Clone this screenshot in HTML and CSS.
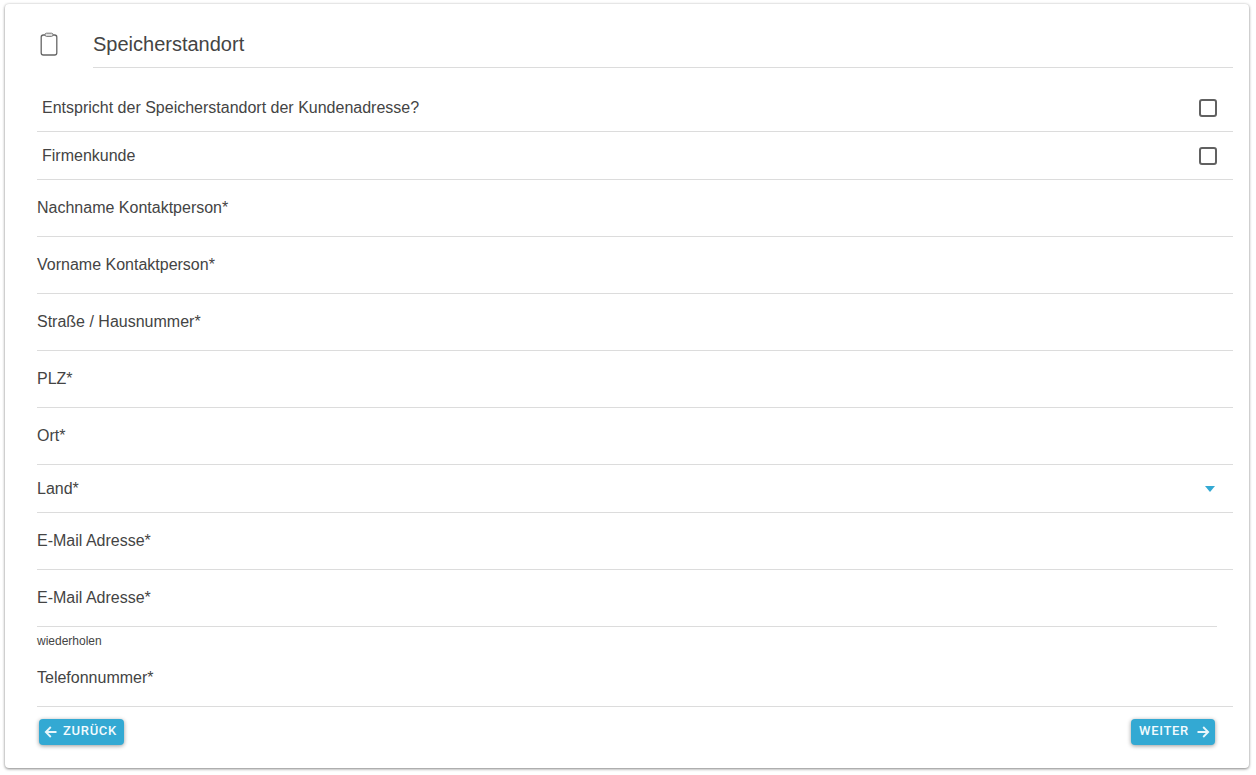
FILE: index.html
```html
<!DOCTYPE html>
<html lang="de">
<head>
<meta charset="utf-8">
<title>Speicherstandort</title>
<link rel="stylesheet" href="styles.css">
</head>
<body>
<main class="card">
  <header class="head">
    <svg class="clip" width="18" height="24" viewBox="0 0 18 24" aria-hidden="true">
      <rect x="1.2" y="3" width="15.6" height="20" rx="2.2" fill="none" stroke="#666" stroke-width="1.3"/>
      <rect x="5" y="1.2" width="8" height="3.2" rx="1.5" fill="#e4e4e4" stroke="#777" stroke-width="1"/>
    </svg>
    <h1 class="title">Speicherstandort</h1>
  </header>
  <div class="form">
    <label class="check-row"><span>Entspricht der Speicherstandort der Kundenadresse?</span><i class="box"></i></label>
    <label class="check-row"><span>Firmenkunde</span><i class="box"></i></label>
    <div class="field">Nachname Kontaktperson*</div>
    <div class="field">Vorname Kontaktperson*</div>
    <div class="field">Straße / Hausnummer*</div>
    <div class="field">PLZ*</div>
    <div class="field">Ort*</div>
    <div class="select">Land*<i class="caret"></i></div>
    <div class="field">E-Mail Adresse*</div>
    <div class="field short">E-Mail Adresse*</div>
    <div class="hint">wiederholen</div>
    <div class="field">Telefonnummer*</div>
  </div>
  <footer class="actions">
    <button class="btn back" type="button">
      <svg width="14" height="14" viewBox="0 0 14 14" aria-hidden="true"><path d="M12.5 7H2M6.8 2 1.8 7l5 5" fill="none" stroke="#e8f6fb" stroke-width="1.8"/></svg>
      <span class="btn-label">ZURÜCK</span>
    </button>
    <button class="btn next" type="button">
      <span class="btn-label">WEITER</span>
      <svg width="14" height="14" viewBox="0 0 14 14" aria-hidden="true"><path d="M1.5 7H12M7.2 2l5 5-5 5" fill="none" stroke="#e8f6fb" stroke-width="1.8"/></svg>
    </button>
  </footer>
</main>
</body>
</html>
```

FILE: styles.css
```css
* { box-sizing: border-box; }
html, body { margin: 0; height: 100%; background: #fff; }
body {
  padding: 4px 7px 7px 5px;
  font-family: "Liberation Sans", Arial, sans-serif;
  font-size: 16px;
  color: #444;
  overflow: hidden;
}
.card {
  height: 764px;
  padding: 0 16px 0 32px;
  background: #fff;
  border-radius: 4px;
  box-shadow: 0 1px 3px rgba(0,0,0,.45), 0 0 3px rgba(0,0,0,.1);
}
.head {
  display: flex;
  height: 64px;
}
.clip { margin: 28px 0 0 3px; flex: none; }
.title {
  flex: 1;
  height: 64px;
  margin: 0 0 0 35px;
  padding-top: 29px;
  font-size: 20px;
  font-weight: 400;
  line-height: 23px;
  border-bottom: 1px solid #dcdcdc;
}
.form { padding-top: 16px; }
.check-row {
  display: flex;
  justify-content: space-between;
  align-items: center;
  height: 48px;
  padding: 0 16px 0 5px;
  border-bottom: 1px solid #dcdcdc;
}
.box {
  width: 18px;
  height: 18px;
  border: 2px solid #616161;
  border-radius: 3px;
}
.field {
  height: 57px;
  padding-top: 18px;
  line-height: 20px;
  border-bottom: 1px solid #dcdcdc;
}
.select {
  display: flex;
  justify-content: space-between;
  align-items: center;
  height: 48px;
  padding-right: 18px;
  border-bottom: 1px solid #dcdcdc;
}
.caret {
  width: 0;
  height: 0;
  border-left: 5px solid transparent;
  border-right: 5px solid transparent;
  border-top: 6px solid #33a9d3;
}
.short { margin-right: 16px; }
.hint {
  height: 23px;
  padding-top: 7px;
  font-size: 12px;
  line-height: 14px;
}
.actions {
  display: flex;
  justify-content: space-between;
  padding: 12px 18px 0 2px;
}
.btn {
  display: flex;
  align-items: center;
  gap: 5px;
  width: 85px;
  height: 26px;
  padding: 0 5px;
  border: 0;
  border-radius: 4px;
  background: #33a9d3;
  color: #f2fbfe;
  font-family: Roboto, sans-serif;
  font-size: 13px;
  font-weight: 500;
  letter-spacing: .7px;
  box-shadow: 0 1px 4px rgba(0,0,0,.4);
}
.btn-label { padding-bottom: 4px; }
.next { width: 84px; padding: 0 5px 0 8px; justify-content: space-between; }
```
